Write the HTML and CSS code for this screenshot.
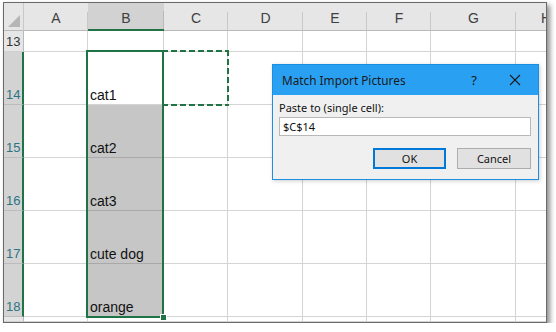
FILE: index.html
```html
<!DOCTYPE html>
<html>
<head>
<meta charset="utf-8">
<link rel="stylesheet" href="styles.css">
</head>
<body>
<div class="frame">
  <div class="sheet">
    <div class="hd corner"><span class="tri"></span></div>
    <div class="hd col">A</div>
    <div class="hd col colsel">B</div>
    <div class="hd col">C</div>
    <div class="hd col">D</div>
    <div class="hd col">E</div>
    <div class="hd col">F</div>
    <div class="hd col">G</div>
    <div class="hd col last">H</div>

    <div class="rh">13</div>
    <div class="c"></div><div class="c"></div><div class="c"></div><div class="c"></div><div class="c"></div><div class="c"></div><div class="c"></div><div class="c"></div>

    <div class="rh rsel">14</div>
    <div class="c"></div><div class="c txt">cat1</div><div class="c"></div><div class="c"></div><div class="c"></div><div class="c"></div><div class="c"></div><div class="c"></div>

    <div class="rh rsel">15</div>
    <div class="c"></div><div class="c txt fill">cat2</div><div class="c"></div><div class="c"></div><div class="c"></div><div class="c"></div><div class="c"></div><div class="c"></div>

    <div class="rh rsel">16</div>
    <div class="c"></div><div class="c txt fill">cat3</div><div class="c"></div><div class="c"></div><div class="c"></div><div class="c"></div><div class="c"></div><div class="c"></div>

    <div class="rh rsel">17</div>
    <div class="c"></div><div class="c txt fill">cute dog</div><div class="c"></div><div class="c"></div><div class="c"></div><div class="c"></div><div class="c"></div><div class="c"></div>

    <div class="rh rsel">18</div>
    <div class="c"></div><div class="c txt fill">orange</div><div class="c"></div><div class="c"></div><div class="c"></div><div class="c"></div><div class="c"></div><div class="c"></div>

    <div class="rh"></div>
    <div class="c"></div><div class="c"></div><div class="c"></div><div class="c"></div><div class="c"></div><div class="c"></div><div class="c"></div><div class="c"></div>
  </div>

  <div class="sel"><span class="handle"></span></div>
  <div class="ants"></div>

  <div class="dialog">
    <div class="titlebar">
      <span class="title">Match Import Pictures</span>
      <span class="help">?</span>
      <svg class="close" width="12" height="12" viewBox="0 0 12 12"><path d="M1 1L11 11M11 1L1 11" stroke="#1a1a1a" stroke-width="1.1" fill="none"/></svg>
    </div>
    <div class="body">
      <div class="label">Paste to (single cell):</div>
      <div class="input">$C$14</div>
      <div class="buttons">
        <div class="btn ok">OK</div>
        <div class="btn">Cancel</div>
      </div>
    </div>
  </div>
</div>
</body>
</html>
```

FILE: styles.css
```css
html, body {
  margin: 0;
  padding: 0;
  background: #ffffff;
}

.frame {
  position: relative;
  box-sizing: border-box;
  margin: 2px 0 0 3px;
  width: 544px;
  height: 321px;
  border: 1px solid #6a6a6a;
  overflow: hidden;
  box-shadow: 3px 3px 5px rgba(0, 0, 0, 0.45);
  background: #fff;
}

.sheet {
  display: grid;
  grid-template-columns: 20px 64px 76px 64px 75px 64px 64px 85px 1fr;
  grid-template-rows: 28px 21px 53px 53px 53px 53px 53px 1fr;
  height: 100%;
  font-family: "Liberation Sans", Arial, sans-serif;
  font-size: 14px;
}

.sheet > div {
  box-sizing: border-box;
}

.hd {
  background: #e6e6e6;
  border-bottom: 1px solid #b9b9b9;
}

.col {
  display: flex;
  align-items: center;
  justify-content: center;
  padding-top: 3px;
  color: #404040;
  background: linear-gradient(#c8c8c8, #c8c8c8) right bottom / 1px 18px no-repeat, #e6e6e6;
}

.col.last {
  justify-content: flex-start;
  padding-left: 25px;
}

.colsel {
  background: linear-gradient(#b8b8b8, #b8b8b8) right bottom / 1px 18px no-repeat, #d2d2d2;
  border-bottom: 2px solid #217346;
}

.corner {
  display: flex;
  align-items: flex-end;
  justify-content: flex-end;
  padding: 0 3px 3px 0;
  border-right: 1px solid #c8c8c8;
}

.tri {
  width: 0;
  height: 0;
  border-left: 12px solid transparent;
  border-bottom: 12px solid #b6b6b6;
}

.rh {
  background: #e6e6e6;
  border-right: 1px solid #b9b9b9;
  border-bottom: 1px solid #d0d0d0;
  display: flex;
  align-items: flex-end;
  padding: 0 0 2px 2px;
  font-size: 13px;
  color: #333;
}

.rsel {
  background: #d3d3d3;
  border-right: 2px solid #217346;
  border-bottom: 1px solid #bcbcbc;
  color: #2c7482;
}

.c {
  border-right: 1px solid #d4d4d4;
  border-bottom: 1px solid #d4d4d4;
}

.txt {
  display: flex;
  align-items: flex-end;
  padding: 0 0 1px 2px;
  color: #111;
}

.fill {
  background: #c6c6c6;
  border-bottom-color: #a9a9a9;
}

.sel {
  position: absolute;
  left: 82px;
  top: 47px;
  width: 78px;
  height: 268px;
  box-sizing: border-box;
  border: 2px solid #217346;
}

.handle {
  position: absolute;
  right: -5px;
  bottom: -5px;
  width: 5px;
  height: 5px;
  background: #217346;
  border: 1px solid #fff;
}

.ants {
  position: absolute;
  left: 158px;
  top: 47px;
  width: 67px;
  height: 56px;
  background:
    repeating-linear-gradient(90deg, #217346 0 6px, transparent 6px 9px) left top / 100% 2px no-repeat,
    repeating-linear-gradient(90deg, #217346 0 6px, transparent 6px 9px) left bottom / 100% 2px no-repeat,
    repeating-linear-gradient(180deg, #217346 0 6px, transparent 6px 9px) left top / 2px 100% no-repeat,
    repeating-linear-gradient(180deg, #217346 0 6px, transparent 6px 9px) right top / 2px 100% no-repeat;
}

.dialog {
  position: absolute;
  left: 268px;
  top: 61px;
  width: 267px;
  height: 116px;
  box-sizing: border-box;
  border: 1px solid #1c8fe3;
  background: #f0f0f0;
  font-family: "Noto Sans", "Liberation Sans", sans-serif;
  font-size: 11px;
  color: #111;
  box-shadow: 1px 1px 4px rgba(0, 0, 0, 0.2);
}

.titlebar {
  height: 30px;
  background: #2aa0f2;
  display: flex;
  align-items: center;
  padding-left: 9px;
  font-size: 11.8px;
}

.title {
  flex: 1;
  color: #1a1a1a;
}

.help {
  width: 20px;
  margin-right: 25px;
  text-align: center;
  font-size: 13px;
}

.close {
  margin-right: 17px;
}

.body {
  padding: 5px 6px 0 6px;
}

.label {
  height: 17px;
  line-height: 16px;
}

.input {
  box-sizing: border-box;
  height: 19px;
  width: 252px;
  border: 1px solid #b8b8b8;
  background: #fff;
  padding-left: 3px;
  line-height: 17px;
}

.buttons {
  display: flex;
  justify-content: flex-end;
  gap: 11px;
  margin-top: 12px;
  padding-right: 1px;
}

.btn {
  box-sizing: border-box;
  width: 74px;
  height: 21px;
  background: #e1e1e1;
  border: 1px solid #adadad;
  display: flex;
  align-items: center;
  justify-content: center;
}

.btn.ok {
  width: 73px;
  border: 2px solid #0078d7;
}
```
